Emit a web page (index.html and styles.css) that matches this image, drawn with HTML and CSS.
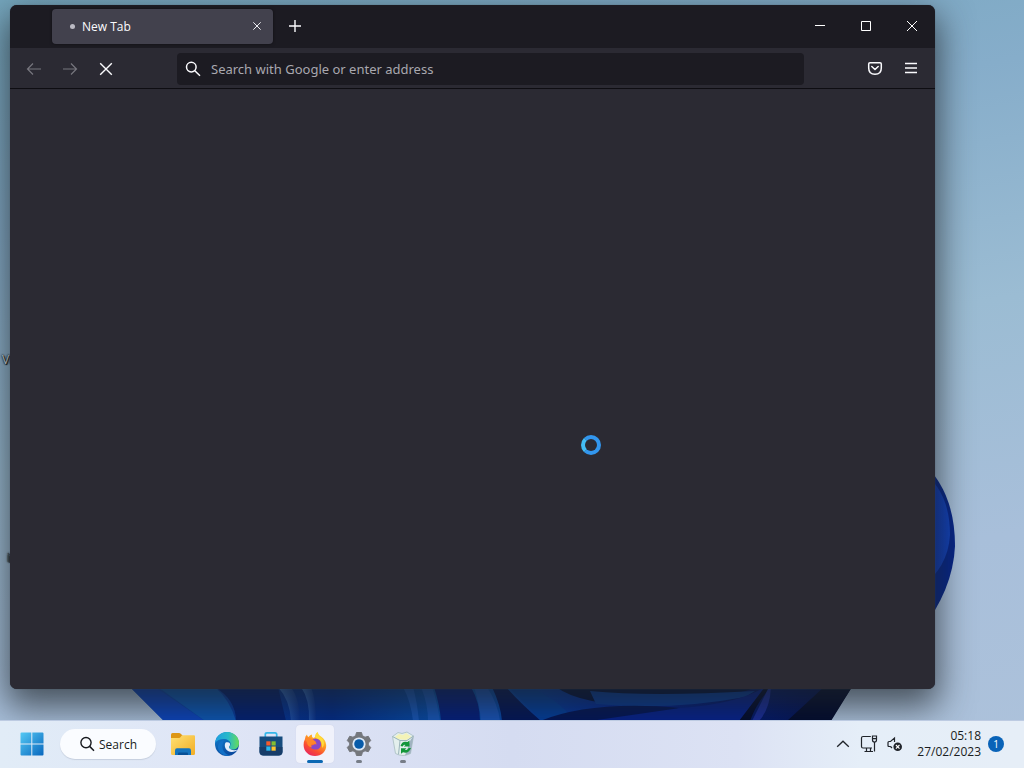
FILE: index.html
```html
<!DOCTYPE html>
<html lang="en">
<head>
<meta charset="utf-8">
<meta name="viewport" content="width=device-width, initial-scale=1">
<title>New Tab</title>
<link rel="stylesheet" href="styles.css">
</head>
<body>
<div class="desktop">
  <svg class="wallpaper" viewBox="0 0 1024 768" preserveAspectRatio="none" aria-hidden="true">
    <defs>
      <linearGradient id="petal" x1="0" x2="1"><stop offset="0" stop-color="#0b48b4"/><stop offset=".28" stop-color="#002a86"/><stop offset=".45" stop-color="#0650ac"/><stop offset=".7" stop-color="#01218c"/><stop offset="1" stop-color="#02104c"/></linearGradient>
      <linearGradient id="fold" x1="0" x2="1"><stop offset="0" stop-color="#3470c6"/><stop offset="1" stop-color="#062e88"/></linearGradient>
      <linearGradient id="rim" x1="0" x2="1"><stop offset="0" stop-color="#0a2faa"/><stop offset="1" stop-color="#1040b8"/></linearGradient>
    </defs>
    <path d="M920 460Q955 490 955 546Q953 590 920 632Z" fill="#052487"/>
    <path d="M920 470Q950 490 950 535Q948 568 920 588Z" fill="url(#rim)"/>
    <path d="M130 687L164 721H830L852 687Z" fill="url(#petal)"/>
    <path d="M130 687L164 721H205L155 687Z" fill="#0a43bd"/>
    <path d="M158 687L205 721H236Q230 700 215 687Z" fill="#0a55b4"/>
    <path d="M215 687Q236 700 236 721H286L278 687Z" fill="#001f73"/>
    <path d="M278 687Q290 700 291 721H300Q300 700 291 687Z" fill="url(#fold)"/>
    <path d="M301 687Q310 700 309 721H316Q316 700 311 687Z" fill="url(#fold)"/>
    <path d="M403 687Q411 702 413 721H419Q417 701 413 687ZM421 687Q428 704 428 721H440Q437 701 432 687Z" fill="#1453b5"/>
    <path d="M434 687Q440 706 441 721H480Q480 703 471 687Z" fill="#021d7c"/>
    <path d="M474 687Q480 706 481 721H500Q498 704 487 687Z" fill="#1651b6"/>
    <path d="M492 687Q501 706 502 721H541Q520 703 506 687Z" fill="#011457"/>
    <path d="M508 687Q525 703 542 721H575Q560 701 530 687Z" fill="#003c9b"/>
    <path d="M556 687Q582 706 650 705Q710 703 758 687Z" fill="#01113f"/>
    <path d="M590 691Q650 697 755 691L745 697Q670 711 596 704Z" fill="#063996"/>
    <path d="M540 721Q592 700 680 708Q640 721 600 721Z" fill="#011457"/>
    <path d="M680 708Q738 704 765 687L740 721H590Z" fill="#04208b"/>
    <path d="M765 687L739 721H750Q757 702 771 687ZM824 687Q798 711 787 721H831L852 687Z" fill="#010a2d"/>
    <path d="M769 687L752 721H759Q770 709 771 687Z" fill="#172b98"/>
  </svg>

  <main class="workspace">
    <span class="icon-label label-upper">Vi</span>
    <span class="icon-label label-lower">i</span>
    <section class="browser" aria-label="Browser window">
      <header class="titlebar">
        <div class="tab">
          <span class="tab-dot"></span>
          <span class="tab-title">New Tab</span>
          <button class="tab-close" aria-label="Close tab"><svg width="10" height="10" viewBox="0 0 10 10"><path d="M1.3 1.3 8.7 8.7M8.7 1.3 1.3 8.7" stroke="#ececf1"/></svg></button>
        </div>
        <button class="new-tab" aria-label="Open a new tab"><svg width="14" height="14" viewBox="0 0 14 14"><path d="M7 1V13M1 7H13" stroke="#fbfbfe" stroke-width="1.4"/></svg></button>
        <div class="window-controls">
          <button class="window-button" aria-label="Minimize"><svg width="12" height="12" viewBox="0 0 12 12"><path d="M1 5.5H11" stroke="#fff"/></svg></button>
          <button class="window-button" aria-label="Maximize"><svg width="12" height="12" viewBox="0 0 12 12"><path d="M1.5 1.5H10.5V10.5H1.5Z" stroke="#fff"/></svg></button>
          <button class="window-button" aria-label="Close"><svg width="12" height="12" viewBox="0 0 12 12"><path d="M1 1 11 11M11 1 1 11" stroke="#fff"/></svg></button>
        </div>
      </header>
      <nav class="toolbar" aria-label="Navigation">
        <button class="tool" aria-label="Back" disabled><svg width="16" height="16" viewBox="0 0 16 16"><path d="M15 8H1.5M7 2.5 1.5 8 7 13.5" stroke="#77767e" stroke-width="1.2"/></svg></button>
        <button class="tool" aria-label="Forward" disabled><svg width="16" height="16" viewBox="0 0 16 16"><path d="M1 8H14.5M9 2.5 14.5 8 9 13.5" stroke="#77767e" stroke-width="1.2"/></svg></button>
        <button class="tool" aria-label="Stop"><svg width="16" height="16" viewBox="0 0 16 16"><path d="M2.2 2.2 13.8 13.8M13.8 2.2 2.2 13.8" stroke="#fbfbfe" stroke-width="1.4"/></svg></button>
        <label class="address">
          <svg width="16" height="16" viewBox="0 0 16 16"><circle cx="6.3" cy="6.1" r="4.8" stroke="#fbfbfe" stroke-width="1.5"/><path d="M9.8 9.7 15 14.8" stroke="#fbfbfe" stroke-width="1.5"/></svg>
          <input class="address-input" type="text" aria-label="Address" placeholder="Search with Google or enter address">
        </label>
        <button class="tool" aria-label="Save to Pocket"><svg width="16" height="16" viewBox="0 0 16 16"><path d="M3 1.8H13Q14.3 1.8 14.3 3.1V7Q14.3 13.3 8 13.3Q1.7 13.3 1.7 7V3.1Q1.7 1.8 3 1.8ZM4.8 5.5 8 8.5 11.2 5.5" stroke="#fbfbfe" stroke-width="1.5" stroke-linecap="round" stroke-linejoin="round"/></svg></button>
        <button class="tool" aria-label="Open application menu"><svg width="16" height="16" viewBox="0 0 16 16"><path d="M2 2.5H14M2 7H14M2 11.5H14" stroke="#fbfbfe" stroke-width="1.4"/></svg></button>
      </nav>
      <div class="page"></div>
    </section>
  </main>

  <footer class="taskbar">
    <button class="app" aria-label="Start"><svg width="24" height="24" viewBox="0 0 24 24"><defs><linearGradient id="win" x2="1" y2="1"><stop stop-color="#55c9f4"/><stop offset="1" stop-color="#0867be"/></linearGradient></defs><path d="M.5 1.5Q.5.5 1.5.5H11.3V11.5H.5ZM12.3.5H22.5Q23.5.5 23.5 1.5V11.5H12.3ZM.5 12.5H11.3V23.5H1.5Q.5 23.5.5 22.5ZM12.3 12.5H23.5V22.5Q23.5 23.5 22.5 23.5H12.3Z" fill="url(#win)"/></svg></button>
    <button class="search"><svg width="16" height="16" viewBox="0 0 16 16"><circle cx="7" cy="6.6" r="5.1" stroke="#17191e" stroke-width="1.4"/><path d="M10.6 10.4 15 14.8" stroke="#17191e" stroke-width="1.5"/></svg>Search</button>
    <button class="app" aria-label="File Explorer"><svg width="26" height="26" viewBox="0 0 26 26"><defs><linearGradient id="folder" x2="1" y2="1"><stop stop-color="#ffe174"/><stop offset="1" stop-color="#f2ad24"/></linearGradient></defs><path d="M1 3.5Q1 2 2.5 2H9Q10 2 11 3L12.5 4.5V9H1Z" fill="#dd9615"/><path d="M1 7H9Q10 7 11 5.5L12 4.3H24Q25 4.3 25 5.5V22.5Q25 24 23.5 24H2.5Q1 24 1 22.5Z" fill="url(#folder)"/><path d="M5 24V19.5Q5 17.3 7 17.3H19Q21 17.3 21 19.5V24Z" fill="#1473bd"/><path d="M8 24V22.5Q8 21.5 9 21.5H17Q18 21.5 18 22.5V24Z" fill="#075096"/></svg></button>
    <button class="app" aria-label="Edge"><svg width="26" height="26" viewBox="0 0 26 26"><defs><linearGradient id="edgeTop"><stop stop-color="#1f9ee0"/><stop offset=".55" stop-color="#28b9c9"/><stop offset="1" stop-color="#67dc58"/></linearGradient><linearGradient id="edgeLow" x2=".3" y2="1"><stop stop-color="#1285d3"/><stop offset="1" stop-color="#0a4b9f"/></linearGradient></defs><circle cx="13" cy="13" r="12" fill="url(#edgeLow)"/><path d="M1 12C2 5 7 1 13 1C20 1 25 6 25 12C25 17 21 19 18 18.5C15 18 14.8 16.5 16 15C18 12 15 8.5 11 8C7 7.5 3 9 1 12Z" fill="url(#edgeTop)"/><path d="M9 12.5C7 17 10 23 16 24.6C11 25.6 5 23 4 17C3.5 13 6 9.5 10 9Z" fill="#1270c6"/><path d="M12 11.3C10 13 10.5 18 14 20C17.5 22 22 20.5 24 18.5Q20 20 17 18.5C14.5 17.2 14.5 16 16 14.2Q16.7 10.5 12 11.3Z" fill="#e5edfa"/></svg></button>
    <button class="app" aria-label="Microsoft Store"><svg width="26" height="26" viewBox="0 0 26 26"><path d="M7.3 7V3.5Q7.3 1.8 9 1.8H17Q18.7 1.8 18.7 3.5V7" stroke="#35b7e8" stroke-width="1.7"/><path d="M1.5 5.5H24.5V20.5Q24.5 24.5 20.5 24.5H5.5Q1.5 24.5 1.5 20.5Z" fill="#164c7e"/><path d="M1.5 16H24.5V20.5Q24.5 24.5 20.5 24.5H5.5Q1.5 24.5 1.5 20.5Z" fill="#173d69"/><path d="M8.3 10.3H12.5V14.5H8.3Z" fill="#f45b2d"/><path d="M13.5 10.3H17.7V14.5H13.5Z" fill="#83bd32"/><path d="M8.3 15.5H12.5V19.7H8.3Z" fill="#29b8ef"/><path d="M13.5 15.5H17.7V19.7H13.5Z" fill="#fec52e"/></svg></button>
    <button class="app running active" aria-label="Firefox"><svg width="26" height="26" viewBox="0 0 26 26"><defs><linearGradient id="fox" x1=".8" x2=".2" y2="1"><stop stop-color="#fff13d"/><stop offset=".4" stop-color="#ff9a23"/><stop offset=".7" stop-color="#fa4c31"/><stop offset="1" stop-color="#e52265"/></linearGradient></defs><path d="M3 8Q3 5 5 3.5Q5 5 6.5 6Q8 3.8 10 3.5Q9.5 5.5 11 7L13 6.2Q13 3 15.5 1Q16.3 4 19 5.5Q23.8 8.5 24.2 14C24.6 20.5 19.5 25 13 25C6.5 25 1.6 20.3 1.6 14Q1.6 10.5 3 8Z" fill="url(#fox)"/><path d="M9.5 9Q14 6 17.5 9C20.3 12 19.2 18.2 14.5 18.6C10.8 18.8 8 16.8 8 14.2Q10.2 15.3 12.5 13.3H15Q13.8 11.2 11 11Z" fill="#8648c7"/><path d="M3 8Q7 6 10 8Q12.3 9.5 14.4 11.2Q12.5 12.8 10 12.8Q8.5 14.5 9.8 16.3Q5 15.5 5 11Z" fill="#ff8629"/><path d="M15.5 1Q16 5 20 7.3Q24 12.5 20.2 17Q20.4 11 17 8.3Q14 7 13 6.2Q13 3 15.5 1Z" fill="#ffdc3c"/></svg></button>
    <button class="app running" aria-label="Settings"><svg width="26" height="26" viewBox="0 0 26 26"><path d="M10.5 1.5H15.5L16.4 4.7 19 6.2 22.3 5.3 24.7 9.6 22.3 12V14L24.7 16.4 22.3 20.7 19 19.8 16.4 21.3 15.5 24.5H10.5L9.6 21.3 7 19.8 3.7 20.7 1.3 16.4 3.7 14V12L1.3 9.6 3.7 5.3 7 6.2 9.6 4.7Z" fill="#74777c" stroke="#74777c" stroke-linejoin="round"/><circle cx="13" cy="13" r="6.6" fill="#dce8f7"/><circle cx="13" cy="13" r="4.8" fill="#075ba9"/></svg></button>
    <button class="app running" aria-label="Recycle Bin"><svg width="26" height="26" viewBox="0 0 26 26"><path d="M2.5 5.5 8 1.5 12 2.5 17 1 23.5 5 20.5 22.5Q13 26.5 5.5 22.5Z" fill="#e3efed" stroke="#b3c6ca"/><path d="M5 6 9 3 13 4 16 2 21.5 6 16 9 8 8Z" fill="#f3f3b8"/><path d="M2.5 5.5 10 9.5 8.5 23.3M23.5 5 17 9.5M10 9.5H17" stroke="#9ab4ba"/><path d="M20.5 9 23.5 5 20.5 22.5 15 24.5Z" fill="#9fb2c0"/><path d="M10.5 15Q12 9.5 17.5 11L19.5 9.5V15.5H13.8L15.5 13.9Q13.7 13 12.6 15.6ZM21 17Q18.5 23 13 21.3L11 22.7V17.3H16.5L14.9 18.9Q17.4 19.8 18.6 17Z" fill="#12963a"/></svg></button>
    <div class="tray">
      <button class="tray-button" aria-label="Show hidden icons"><svg width="14" height="14" viewBox="0 0 14 14"><path d="M1.2 9.8 7 4.2 12.8 9.8" stroke="#20242a" stroke-width="1.3"/></svg></button>
      <button class="tray-button" aria-label="Network"><svg width="18" height="18" viewBox="0 0 18 18"><path d="M10.8 1.5H3Q1.5 1.5 1.5 3V11.5Q1.5 13 3 13H12M6.5 13V16.5M4.5 16.5H13M10.5 13.5V16.5M14.5 7V16.5M12.5 1H16.5V5Q16.5 7 14.5 7Q12.5 7 12.5 5ZM12.5 3.7H16.5" stroke="#20242a" stroke-width="1.2"/></svg></button>
      <button class="tray-button" aria-label="Sound muted"><svg width="18" height="18" viewBox="0 0 18 18"><path d="M4.5 11.5H3Q2 11.5 2 10.5V7.5Q2 6.5 3 6.5H4.5L8.5 3V7M4.5 11.5 6 13" stroke="#20242a" stroke-width="1.2"/><circle cx="11.7" cy="11.8" r="4.3" fill="#20242a"/><path d="M9.9 10 13.5 13.6M13.5 10 9.9 13.6" stroke="#fff" stroke-width="1.1"/></svg></button>
      <button class="clock"><time datetime="2023-02-27T05:18">05:18<br>27/02/2023</time></button>
      <button class="badge" aria-label="1 notification">1</button>
    </div>
  </footer>
  <div class="busy-cursor"></div>
</div>
</body>
</html>
```
FILE: styles.css
```css
* { box-sizing: border-box; }

body {
  margin: 0;
  font-family: "Open Sans", "Noto Sans", sans-serif;
  font-size: 12px;
}

button {
  display: flex;
  align-items: center;
  justify-content: center;
  flex: none;
  padding: 0;
  border: 0;
  background: none;
  color: inherit;
  font: inherit;
}

svg { display: block; flex: none; fill: none; }

.desktop {
  position: relative;
  display: flex;
  flex-direction: column;
  min-height: 100vh;
  overflow: hidden;
  background: linear-gradient(170deg, #75a6bd 0%, #86adca 25%, #9bbcd3 50%, #a8bfda 75%, #adc2db 100%);
}

.wallpaper { position: absolute; inset: 0; width: 100%; height: 100%; }

.workspace {
  position: relative;
  display: flex;
  flex: 1;
  padding: 5px 89px 31px 10px;
}

.icon-label {
  position: absolute;
  left: 2px;
  color: #dfe6ec;
  text-shadow: 1px 1px 1px #000, 0 0 2px #000, 0 0 2px #000;
}
.label-upper { top: 351px; }
.label-lower { top: 549px; left: 7px; color: #46525e; }

.browser {
  position: relative;
  display: flex;
  flex: 1;
  flex-direction: column;
  overflow: hidden;
  border-radius: 7px;
  background: #2b2a33;
  color: #fbfbfe;
  box-shadow: 0 0 1px #415062, 0 14px 34px 4px rgba(30, 36, 40, 0.7);
}

.titlebar {
  display: flex;
  align-items: center;
  height: 43px;
  padding: 0 0 1px 42px;
  background: #1c1b22;
}

.tab {
  display: flex;
  align-items: center;
  flex: 0 1 221px;
  height: 35px;
  padding: 0 8px 0 18px;
  border-radius: 4px;
  background: #42414d;
  box-shadow: 0 0 3px rgba(0, 0, 0, 0.5);
}
.tab-dot { width: 5px; height: 5px; margin-right: 7px; border-radius: 50%; background: #bbbac3; }
.tab-title { flex: 1; }
.tab-close { width: 16px; height: 24px; }
.new-tab { width: 36px; height: 36px; margin-left: 4px; }
.window-controls { display: flex; margin-left: auto; }
.window-button { width: 46px; height: 40px; }

.toolbar {
  display: flex;
  align-items: center;
  height: 41px;
  padding: 2px 6px 0;
  border-bottom: 1px solid #0e0d12;
}
.tool { width: 36px; height: 32px; }

.address {
  display: flex;
  align-items: center;
  flex: 1;
  gap: 10px;
  height: 32px;
  margin: 0 53px;
  padding: 0 8px;
  border-radius: 4px;
  background: #1c1b22;
}
.address-input {
  flex: 1;
  min-width: 0;
  padding: 0;
  border: 0;
  outline: 0;
  background: none;
  color: #fbfbfe;
  font: 13px "Noto Sans", "Open Sans", sans-serif;
}
.address-input::placeholder { color: #a9a8af; opacity: 1; }

.page { flex: 1; background: #2b2a33; }

.taskbar {
  position: relative;
  display: flex;
  align-items: center;
  height: 48px;
  padding: 0 10px;
  background: linear-gradient(90deg, #e1ecf7, #dfe5f6 22%, #d5dcf1 50%, #dce2f4 72%, #e5eef8 84%, #e6eef7);
  box-shadow: inset 0 1px #bdcbe2;
  color: #191c21;
}

.app {
  position: relative;
  width: 38px;
  height: 38px;
  margin: 0 3px;
  border-radius: 4px;
}
.active { background: #f0f2fb; box-shadow: 0 0 1px #c6cce0; }
.running::after {
  content: "";
  position: absolute;
  bottom: 0;
  width: 6px;
  height: 3px;
  border-radius: 2px;
  background: #777d87;
}
.active::after { width: 16px; background: #0b68b3; }

.search {
  gap: 4px;
  width: 96px;
  height: 30px;
  margin: 0 5px 0 6px;
  border-radius: 15px;
  background: #fafcff;
  box-shadow: 0 1px 1px #c6cfde;
}

.tray { display: flex; align-items: center; margin-left: auto; padding-right: 10px; }
.tray-button { width: 26px; height: 38px; }
.clock { margin-left: 9px; font-size: 12px; line-height: 16px; text-align: right; }
.badge {
  width: 16px;
  height: 16px;
  margin-left: 7px;
  border-radius: 50%;
  background: #0963b8;
  color: #fff;
  font-size: 10px;
}

.busy-cursor {
  position: absolute;
  top: 435px;
  left: 581px;
  width: 20px;
  height: 20px;
  border: 4px solid #3296ee;
  border-left-color: #43bdf4;
  border-radius: 50%;
}
```
